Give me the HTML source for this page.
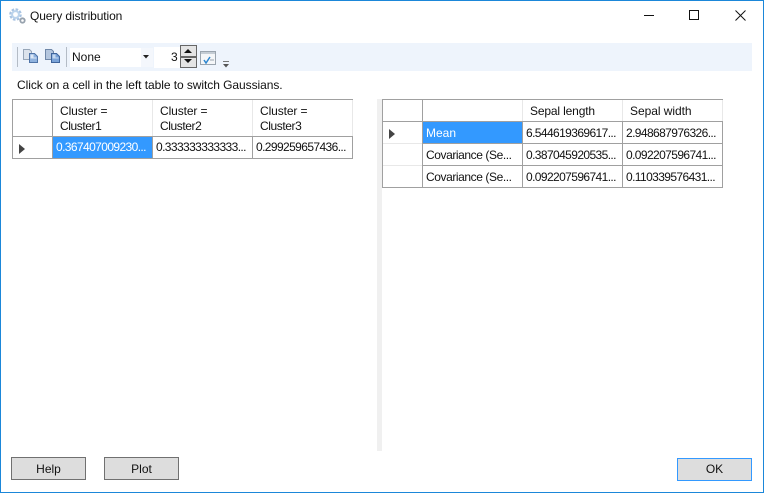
<!DOCTYPE html>
<html><head><meta charset="utf-8"><style>
html,body{margin:0;padding:0;background:#fff}
#w{position:relative;width:762px;height:491px;border:1px solid #1b87d9;background:#fff;overflow:hidden;font:12px "Liberation Sans",sans-serif;color:#111}
#w div{position:absolute}
.t{white-space:nowrap;line-height:15px;height:15px}
.n{letter-spacing:-.6px}
.c{letter-spacing:-.42px}
.l{background:#a0a0a0}
.b{box-sizing:border-box;background:#ddd;border:1px solid #707070;text-align:center;line-height:22px}
</style></head><body><div id="w">
<svg style="position:absolute;left:8px;top:7px" width="18" height="18" viewBox="0 0 18 18"><circle cx="6.500" cy="6.500" r="4.600" fill="none" stroke="#a9c4e2" stroke-width="3.400" stroke-dasharray="2.300 1.300"/><circle cx="6.500" cy="6.500" r="3.400" fill="none" stroke="#bcd4ec" stroke-width="2"/><circle cx="13.500" cy="12.500" r="2.200" fill="none" stroke="#97a2ae" stroke-width="1.800"/></svg>
<div class="t" style="left:29px;top:8px;letter-spacing:-.1px">Query distribution</div>
<div style="left:643px;top:14px;width:10px;height:1px;background:#111"></div>
<div style="left:688px;top:9px;width:8px;height:8px;border:1px solid #111"></div>
<svg style="position:absolute;left:734px;top:9px" width="11" height="11"><path d="M.5.5l10 10M10.500.5l-10 10" stroke="#111" fill="none"/></svg>

<div style="left:11px;top:42px;width:740px;height:28px;background:#eef4fc"></div>
<div style="left:16px;top:46px;width:1px;height:20px;background:#b4bcc6"></div>
<svg style="position:absolute;left:22px;top:48px" width="17" height="15"><path d="M.5.5h6l2 2v8h-8z" fill="#dce3ec" stroke="#97a6b8"/><path d="M6.500 4.500h5l3 3v6h-8z" fill="#8fb2de" stroke="#4f74a8"/><path d="M7.500 5.500h3v3h3v1h-6z" fill="#dbe7f5"/></svg>
<svg style="position:absolute;left:44px;top:48px" width="17" height="15"><path d="M.5.5h6l2 2v8h-8z" fill="#b4c6de" stroke="#6f87a8"/><path d="M6.500 4.500h5l3 3v6h-8z" fill="#7aa3d8" stroke="#3f659c"/><path d="M7.500 5.500h3v3h3v1h-6z" fill="#c6d9ef"/></svg>
<div style="left:65px;top:46px;width:1px;height:20px;background:#b4bcc6"></div>
<div style="left:69px;top:47px;width:83px;height:19px;background:#fff"></div>
<div style="left:140px;top:47px;width:12px;height:19px;background:#f4f7fc"></div>
<div class="t" style="left:71px;top:49px">None</div>
<svg style="position:absolute;left:141px;top:54px" width="9" height="5"><path d="M1 0h6L4 3.500z" fill="#222"/></svg>
<div style="left:153px;top:46px;width:27px;height:21px;background:#fff"></div>
<div class="t" style="left:170px;top:49px">3</div>
<div style="left:179px;top:44px;width:15px;height:21px;background:#e4e4e4;border:1px solid #666"></div>
<div style="left:180px;top:55px;width:15px;height:2px;background:#666"></div>
<svg style="position:absolute;left:182px;top:48px" width="10" height="14"><path d="M1 4L5 0l4 4zM1 10h8l-4 4z" fill="#111"/></svg>
<svg style="position:absolute;left:199px;top:50px" width="17" height="15"><rect x=".5" y=".5" width="15" height="13" fill="#f4f6f8" stroke="#9aa4ae"/><path d="M1 1h14v2H1z" fill="#c4ccd4"/><path d="M4 9l2 3 4-6" stroke="#2c86d0" stroke-width="1.500" fill="none"/><path d="M10 9h4" stroke="#9aa4ae"/></svg>
<svg style="position:absolute;left:221px;top:60px" width="8" height="7"><path d="M1 .5h6" stroke="#777"/><path d="M1 3h6L4 6.500z" fill="#555"/></svg>

<div class="t" style="left:16px;top:77px;letter-spacing:-.06px">Click on a cell in the left table to switch Gaussians.</div>

<!-- left table -->
<div class="l" style="left:11px;top:98px;width:341px;height:1px"></div>
<div class="l" style="left:11px;top:135px;width:341px;height:1px"></div>
<div class="l" style="left:11px;top:157px;width:341px;height:1px"></div>
<div class="l" style="left:11px;top:98px;width:1px;height:60px"></div>
<div class="l" style="left:51px;top:98px;width:1px;height:60px"></div>
<div style="left:151px;top:99px;width:1px;height:36px;background:#e8e8e8"></div>
<div style="left:251px;top:99px;width:1px;height:36px;background:#e8e8e8"></div>
<div style="left:351px;top:99px;width:1px;height:36px;background:#e8e8e8"></div>
<div class="l" style="left:151px;top:136px;width:1px;height:22px"></div>
<div class="l" style="left:251px;top:136px;width:1px;height:22px"></div>
<div class="l" style="left:351px;top:136px;width:1px;height:22px"></div>
<div style="left:52px;top:136px;width:99px;height:21px;background:#3399ff"></div>
<div class="t c" style="left:59px;top:103px;letter-spacing:-.1px">Cluster =</div><div class="t c" style="left:59px;top:118px">Cluster1</div>
<div class="t c" style="left:159px;top:103px;letter-spacing:-.1px">Cluster =</div><div class="t c" style="left:159px;top:118px">Cluster2</div>
<div class="t c" style="left:259px;top:103px;letter-spacing:-.1px">Cluster =</div><div class="t c" style="left:259px;top:118px">Cluster3</div>
<svg style="position:absolute;left:18px;top:143px" width="7" height="10"><path d="M0 0l6 5-6 5z" fill="#444"/></svg>
<div class="t n" style="left:55px;top:139px;color:#fff">0.367407009230...</div>
<div class="t n" style="left:155px;top:139px">0.333333333333...</div>
<div class="t n" style="left:255px;top:139px">0.299259657436...</div>

<!-- splitter -->
<div style="left:376px;top:98px;width:5px;height:352px;background:#f0f0f0"></div>

<!-- right table -->
<div class="l" style="left:381px;top:98px;width:341px;height:1px"></div>
<div class="l" style="left:381px;top:120px;width:341px;height:1px"></div>
<div class="l" style="left:421px;top:142px;width:301px;height:1px"></div>
<div class="l" style="left:421px;top:164px;width:301px;height:1px"></div>
<div style="left:382px;top:142px;width:39px;height:1px;background:#e8e8e8"></div>
<div style="left:382px;top:164px;width:39px;height:1px;background:#e8e8e8"></div>
<div class="l" style="left:381px;top:186px;width:341px;height:1px"></div>
<div class="l" style="left:381px;top:98px;width:1px;height:89px"></div>
<div class="l" style="left:421px;top:98px;width:1px;height:89px"></div>
<div style="left:521px;top:99px;width:1px;height:21px;background:#e8e8e8"></div>
<div style="left:621px;top:99px;width:1px;height:21px;background:#e8e8e8"></div>
<div style="left:721px;top:99px;width:1px;height:21px;background:#e8e8e8"></div>
<div class="l" style="left:521px;top:121px;width:1px;height:66px"></div>
<div class="l" style="left:621px;top:121px;width:1px;height:66px"></div>
<div class="l" style="left:721px;top:121px;width:1px;height:66px"></div>
<div style="left:422px;top:121px;width:99px;height:21px;background:#3399ff"></div>
<div class="t" style="left:529px;top:103px;letter-spacing:-.15px">Sepal length</div>
<div class="t" style="left:629px;top:103px;letter-spacing:-.05px">Sepal width</div>
<svg style="position:absolute;left:388px;top:128px" width="7" height="10"><path d="M0 0l6 5-6 5z" fill="#444"/></svg>
<div class="t" style="left:425px;top:125px;color:#fff">Mean</div>
<div class="t c" style="left:425px;top:147px">Covariance (Se...</div>
<div class="t c" style="left:425px;top:169px">Covariance (Se...</div>
<div class="t n" style="left:525px;top:125px">6.544619369617...</div>
<div class="t n" style="left:625px;top:125px">2.948687976326...</div>
<div class="t n" style="left:525px;top:147px">0.387045920535...</div>
<div class="t n" style="left:625px;top:147px">0.092207596741...</div>
<div class="t n" style="left:525px;top:169px">0.092207596741...</div>
<div class="t n" style="left:625px;top:169px">0.110339576431...</div>

<!-- buttons -->
<div class="b" style="left:10px;top:456px;width:75px;height:23px">Help</div>
<div class="b" style="left:103px;top:456px;width:75px;height:23px">Plot</div>
<div class="b" style="left:676px;top:457px;width:75px;height:23px;border-color:#3399ff;line-height:21px">OK</div>
</div></body></html>
